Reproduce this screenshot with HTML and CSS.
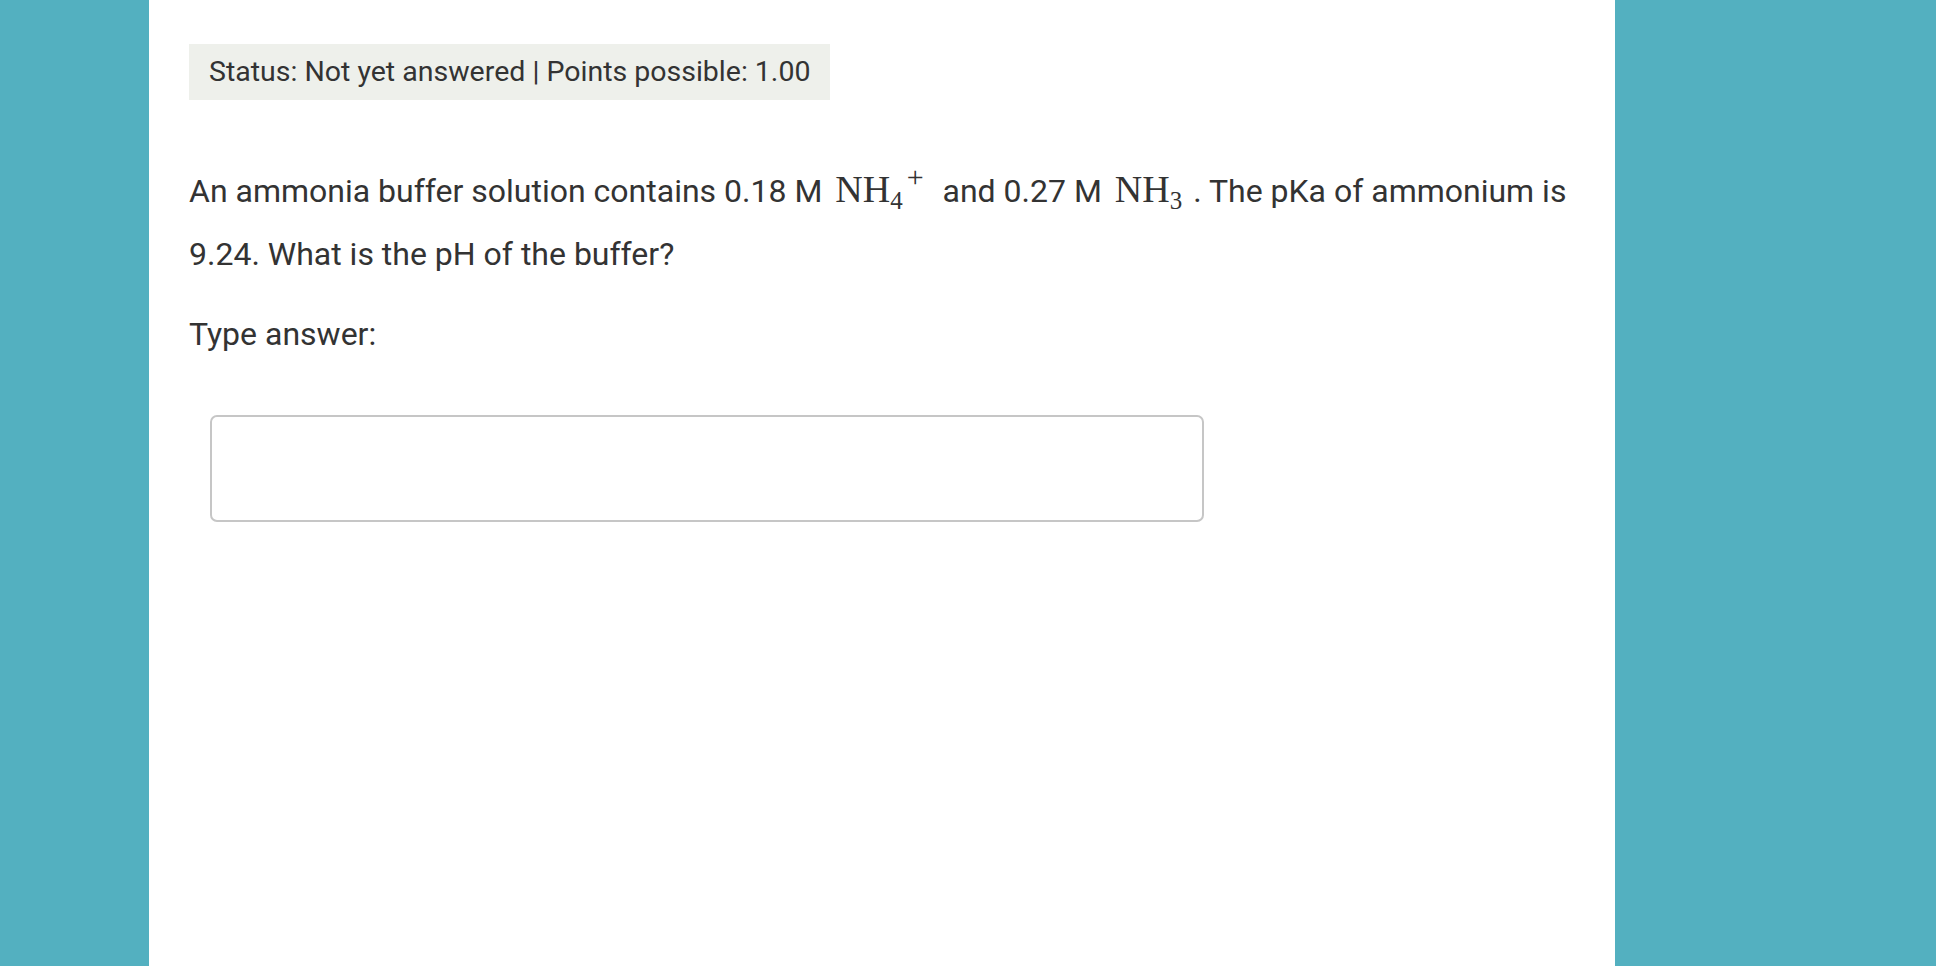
FILE: index.html
```html
<!DOCTYPE html>
<html>
<head>
<meta charset="utf-8">
<link rel="stylesheet" href="styles.css">
</head>
<body>
<div class="page">
  <div class="panel">
    <div class="status">Status: Not yet answered | Points possible: 1.00</div>
    <p class="question">An ammonia buffer solution contains 0.18 M <span class="math">NH<sub>4</sub><sup>+</sup></span> and 0.27 M <span class="math">NH<sub>3</sub></span>. The pKa of ammonium is 9.24. What is the pH of the buffer?</p>
    <p class="label">Type answer:</p>
    <div class="answer-wrap"><input class="answer" type="text"></div>
  </div>
</div>
</body>
</html>
```
FILE: styles.css
```css
html, body {
  margin: 0;
  padding: 0;
  height: 100%;
}
body {
  background: #53b0c0;
  font-family: Roboto, "Liberation Sans", sans-serif;
  color: #333333;
}
.page {
  display: flex;
  height: 100%;
}
.panel {
  background: #ffffff;
  margin-left: 149px;
  width: 1466px;
  box-sizing: border-box;
  padding: 44px 40px 0 40px;
  min-height: 966px;
}
.status {
  display: inline-block;
  background: #eef0eb;
  height: 56px;
  line-height: 56px;
  padding: 0 20px;
  font-size: 28.5px;
}
.question {
  margin: 58px 0 0 0;
  font-size: 32px;
  line-height: 63px;
}
.math {
  font-family: "Liberation Serif", "DejaVu Serif", serif;
  font-size: 38px;
  margin: 0 11px 0 5px;
}
.math sub {
  font-size: 25px;
  vertical-align: -7px;
  line-height: 0;
}
.math sup {
  font-size: 30px;
  vertical-align: 15px;
  line-height: 0;
  margin-left: 4px;
  font-weight: 300;
}
.label {
  margin: 17px 0 0 0;
  font-size: 32px;
  line-height: 63px;
}
.answer-wrap {
  padding: 49px 0 0 21px;
}
.answer {
  display: block;
  width: 994px;
  height: 107px;
  box-sizing: border-box;
  border: 2px solid #c6c6c6;
  border-radius: 7px;
  background: #fff;
  outline: none;
}
```
